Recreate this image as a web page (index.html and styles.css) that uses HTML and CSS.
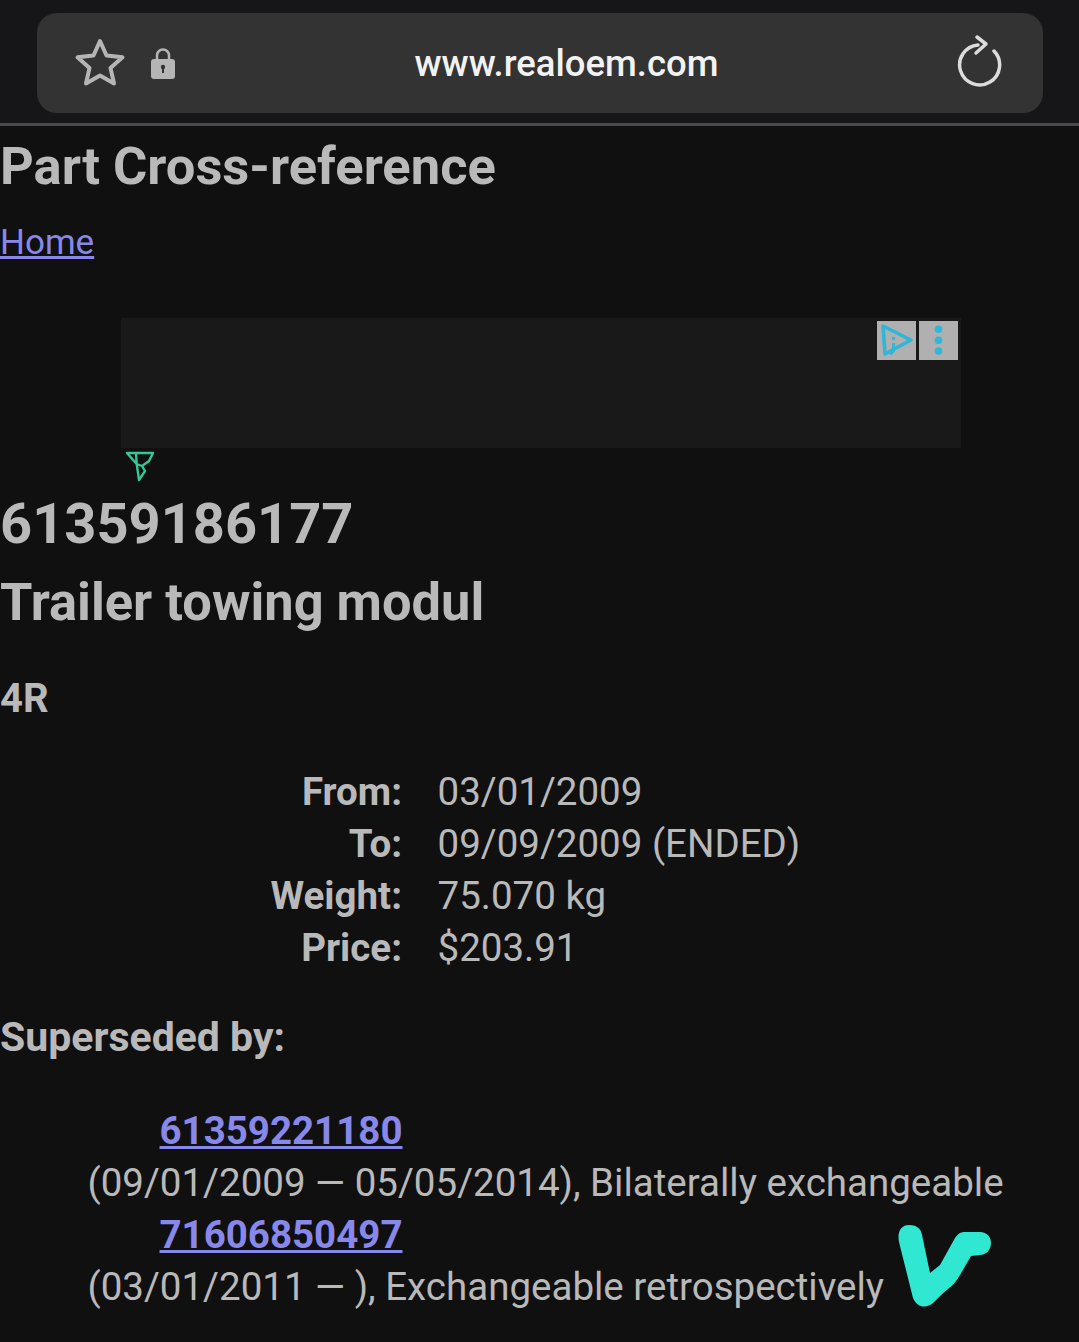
FILE: index.html
```html
<!DOCTYPE html>
<html lang="en">
<head>
  <meta charset="UTF-8">
  <meta name="viewport" content="width=device-width, initial-scale=1.0">
  <title>Part Cross-reference</title>
  <link rel="stylesheet" href="styles.css">
</head>
<body>
  <div class="topbar">
    <div class="urlbar">
      <div class="url-left">
        <svg class="star" viewBox="0 0 52 50" width="52" height="50">
          <path d="M26 3 L32.5 17.5 L48.5 19.3 L36.5 30 L40 45.5 L26 37.5 L12 45.5 L15.5 30 L3.5 19.3 L19.5 17.5 Z" fill="none" stroke="#b5b5b5" stroke-width="4" stroke-linejoin="round"/>
        </svg>
        <svg class="lock" viewBox="0 0 26 34" width="26" height="34">
          <path d="M7 15 V9.5 a6 6 0 0 1 12 0 V15" fill="none" stroke="#b5b5b5" stroke-width="2.5"/>
          <rect x="1" y="13" width="24" height="20" rx="3" fill="#b5b5b5"/>
          <circle cx="13" cy="21" r="2.2" fill="#333"/>
          <rect x="12" y="21" width="2" height="6" fill="#333"/>
        </svg>
      </div>
      <div class="url-text">www.realoem.com</div>
      <svg class="reload" viewBox="0 0 48 58" width="48" height="58">
        <path d="M24 14 A20 20 0 1 0 40 20" fill="none" stroke="#dcdcdc" stroke-width="3.5" stroke-linecap="round"/>
        <path d="M23 6 L32 13 L22 22" fill="none" stroke="#dcdcdc" stroke-width="3.5" stroke-linecap="round" stroke-linejoin="round"/>
      </svg>
    </div>
  </div>

  <main class="page">
    <h1 class="page-title">Part Cross-reference</h1>
    <a class="link home" href="#">Home</a>

    <div class="ad">
      <div class="ad-badges">
        <span class="badge">
          <svg viewBox="0 0 39 39" width="39" height="39">
            <path d="M6 5 L34 19 L8 33 Z" fill="none" stroke="#2fb6d8" stroke-width="3.6" stroke-linejoin="round"/>
            <path d="M16.5 22 V30 L13 33" fill="none" stroke="#2fb6d8" stroke-width="3"/>
            <circle cx="16.5" cy="17.5" r="1.8" fill="#2fb6d8"/>
          </svg>
        </span>
        <span class="badge">
          <svg viewBox="0 0 39 39" width="39" height="39">
            <circle cx="19.5" cy="8.3" r="3.8" fill="#2fb6d8"/>
            <circle cx="19.5" cy="19.3" r="3.8" fill="#2fb6d8"/>
            <circle cx="19.5" cy="30" r="3.8" fill="#2fb6d8"/>
          </svg>
        </span>
      </div>
    </div>
    <svg class="ad-mark" viewBox="0 0 30 32" width="30" height="32">
      <path d="M2 2 H28 L24 10 L17 15 L20 20 L14 29 L11.7 13 Z M11 2 L11.7 13 L17 15" fill="none" stroke="#35c795" stroke-width="2.4" stroke-linejoin="round"/>
    </svg>

    <h2 class="part-no">61359186177</h2>
    <h2 class="part-name">Trailer towing modul</h2>
    <h3 class="code">4R</h3>

    <dl class="details">
      <dt>From:</dt><dd>03/01/2009</dd>
      <dt>To:</dt><dd>09/09/2009 (ENDED)</dd>
      <dt>Weight:</dt><dd>75.070 kg</dd>
      <dt>Price:</dt><dd>$203.91</dd>
    </dl>

    <h3 class="superseded">Superseded by:</h3>
    <div class="replacements">
      <a class="link part-link" href="#">61359221180</a>
      <div class="note">(09/01/2009 — 05/05/2014), Bilaterally exchangeable</div>
      <a class="link part-link" href="#">71606850497</a>
      <div class="note">(03/01/2011 — ), Exchangeable retrospectively</div>
    </div>
  </main>

  <svg class="check-mark" viewBox="0 0 130 110" width="130" height="110">
    <path d="M29 15 C36 15 41 18 42 25 L50 63 L60 55 L75 28 C78 24 80 22 85 22 L100 22 C107 22 111 27 111 33 C111 40 106 45 100 45 L91 46 L80 65 C76 72 72 76 68 79 C62 84 58 88 53 93 C47 98 38 99 33 88 L19 32 C17 22 21 15 29 15 Z" fill="#30e8d2"/>
  </svg>
</body>
</html>
```

FILE: styles.css
```css
* {
  box-sizing: border-box;
}
body {
  margin: 0;
  min-height: 1342px;
  position: relative;
  overflow: hidden;
  background-color: #101011;
  color: #b9b9b9;
  font-family: Roboto, sans-serif;
  font-size: 38.5px;
  line-height: 52px;
}
.topbar {
  height: 126px;
  padding: 13px 36px 0 37px;
  background-color: #161618;
  border-bottom: 3px solid #4a4a4c;
}
.urlbar {
  height: 100px;
  display: flex;
  align-items: center;
  justify-content: space-between;
  padding: 0 37px;
  background-color: #333334;
  border-radius: 20px;
}
.url-left {
  display: flex;
  align-items: center;
  gap: 24px;
  width: 102px;
}
.url-text {
  color: #f2f2f2;
  font-size: 36.5px;
  font-weight: 500;
  margin-left: 3px;
  margin-top: 2px;
}
.reload {
  margin-right: 4px;
  margin-top: -6px;
}
.page-title {
  margin: 0;
  padding-top: 11px;
  font-size: 52.5px;
  line-height: 58px;
  font-weight: 700;
}
.link {
  color: #8888ea;
  text-decoration: underline;
}
.home {
  display: block;
  margin-top: 22px;
  font-size: 35px;
  line-height: 52px;
}
.ad {
  position: relative;
  width: 840px;
  height: 130px;
  margin: 49px 0 0 121px;
  background-color: #19191a;
}
.ad-badges {
  position: absolute;
  top: 3px;
  right: 3px;
  display: flex;
  gap: 3px;
}
.badge {
  display: block;
  width: 39px;
  height: 39px;
  background-color: #b0b0b0;
}
.ad-mark {
  display: block;
  margin: 3px 0 0 125px;
}
.part-no {
  margin: 9px 0 0;
  font-size: 56px;
  line-height: 64px;
  font-weight: 700;
}
.part-name {
  margin: 17px 0 0;
  font-size: 52.4px;
  line-height: 58px;
  font-weight: 700;
}
.code {
  margin: 42px 0 0;
  font-size: 40px;
  line-height: 52px;
  font-weight: 700;
}
.details {
  display: grid;
  grid-template-columns: 402px 1fr;
  column-gap: 35.5px;
  margin: 41px 0 0;
}
.details dt {
  text-align: right;
  font-weight: 700;
}
.details dd {
  margin: 0;
}
.superseded {
  margin: 37px 0 0;
  font-size: 41px;
  line-height: 52px;
  font-weight: 700;
}
.replacements {
  margin-top: 42px;
  padding-left: 87.5px;
}
.part-link {
  display: block;
  margin-left: 72px;
  font-weight: 700;
}
.check-mark {
  position: absolute;
  left: 880px;
  top: 1210px;
}
```
